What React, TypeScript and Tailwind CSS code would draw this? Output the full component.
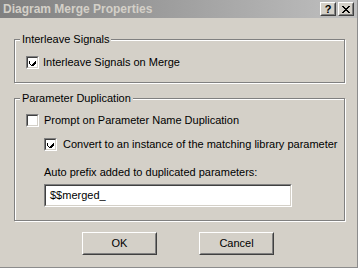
import React from "react";

function Check({ checked }: { checked: boolean }) {
  return (
    <div className="w-[13px] h-[13px] shrink-0 border border-t-[#808080] border-l-[#808080] border-b-white border-r-white">
      <div className="w-full h-full bg-white border border-t-[#404040] border-l-[#404040] border-b-[#d4d0c8] border-r-[#d4d0c8] flex items-center justify-center">
        {checked && (
          <svg width="7" height="7" viewBox="0 0 7 7" shapeRendering="crispEdges">
            <path d="M0 2h1v3h1v1h1v-1h1v-1h1v-1h1v-1h1v3h-1v1h-1v1h-1v1h-1v-1h-1v-1h-1v-1h-1z" fill="#000" />
          </svg>
        )}
      </div>
    </div>
  );
}

function Button({ label }: { label: string }) {
  return (
    <div className="w-[75px] h-[23px] border border-t-white border-l-white border-b-[#404040] border-r-[#404040]">
      <div className="w-full h-full border border-t-[#d4d0c8] border-l-[#d4d0c8] border-b-[#808080] border-r-[#808080] flex items-center justify-center">
        {label}
      </div>
    </div>
  );
}

function TitleButton({ children }: { children: React.ReactNode }) {
  return (
    <div className="w-[16px] h-[14px] bg-[#d4d0c8] border border-t-white border-l-white border-b-[#404040] border-r-[#404040]">
      <div className="w-full h-full border border-t-[#d4d0c8] border-l-[#d4d0c8] border-b-[#808080] border-r-[#808080] flex items-center justify-center">
        {children}
      </div>
    </div>
  );
}

export default function App() {
  return (
    <div
      className="w-[358px] h-[268px] bg-[#d4d0c8] border-r border-b border-[#8c8c8c] flex flex-col text-[11px] text-black leading-none"
      style={{ fontFamily: '"Liberation Sans", Arial, sans-serif' }}
    >
      {/* Title bar */}
      <div className="h-[18px] shrink-0 flex items-center pl-[3px] pr-[3px] bg-gradient-to-r from-[#808080] to-[#c0c0c0]">
        <span className="font-bold text-[#d4d0c8] text-[12px]">Diagram Merge Properties</span>
        <div className="ml-auto flex gap-[2px]">
          <TitleButton>
            <span className="font-bold text-[11px] leading-none">?</span>
          </TitleButton>
          <TitleButton>
            <svg width="8" height="7" viewBox="0 0 8 7" shapeRendering="crispEdges">
              <path d="M0 0h2v1h1v1h2v-1h1v-1h2v1h-1v1h-1v1h-1v1h1v1h1v1h1v1h-2v-1h-1v-1h-2v1h-1v1h-2v-1h1v-1h1v-1h1v-1h-1v-1h-1v-1h-1z" fill="#000" />
            </svg>
          </TitleButton>
        </div>
      </div>

      <div className="flex flex-col pl-[14px] pr-[13px]">
        {/* Interleave Signals */}
        <div className="relative mt-[21px] w-[331px] h-[44px] border border-[#808080] shadow-[1px_1px_0_#fff,inset_1px_1px_0_#fff] pl-[11px] pt-[16px]">
          <span className="absolute -top-[6px] left-[5px] px-[2px] bg-[#d4d0c8]">Interleave Signals</span>
          <div className="flex items-center gap-[4px]">
            <Check checked />
            <span>Interleave Signals on Merge</span>
          </div>
        </div>

        {/* Parameter Duplication */}
        <div className="relative mt-[15px] w-[331px] h-[123px] border border-[#808080] shadow-[1px_1px_0_#fff,inset_1px_1px_0_#fff] pl-[11px] pt-[15px] flex flex-col">
          <span className="absolute -top-[6px] left-[5px] px-[2px] bg-[#d4d0c8]">Parameter Duplication</span>
          <div className="flex items-center gap-[5px]">
            <Check checked={false} />
            <span>Prompt on Parameter Name Duplication</span>
          </div>
          <div className="flex items-center gap-[6px] ml-[18px] mt-[11px]">
            <Check checked />
            <span>Convert to an instance of the matching library parameter</span>
          </div>
          <div className="ml-[18px] mt-[16px]">Auto prefix added to duplicated parameters:</div>
          <div className="ml-[18px] mt-[6px] w-[248px] h-[23px] border border-t-[#808080] border-l-[#808080] border-b-white border-r-white">
            <div className="w-full h-full bg-white border border-t-[#404040] border-l-[#404040] border-b-[#d4d0c8] border-r-[#d4d0c8] flex items-center pl-[4px]">
              $$merged_
            </div>
          </div>
        </div>

        {/* Buttons */}
        <div className="flex gap-[42px] mt-[11px] pl-[68px]">
          <Button label="OK" />
          <Button label="Cancel" />
        </div>
      </div>
    </div>
  );
}
